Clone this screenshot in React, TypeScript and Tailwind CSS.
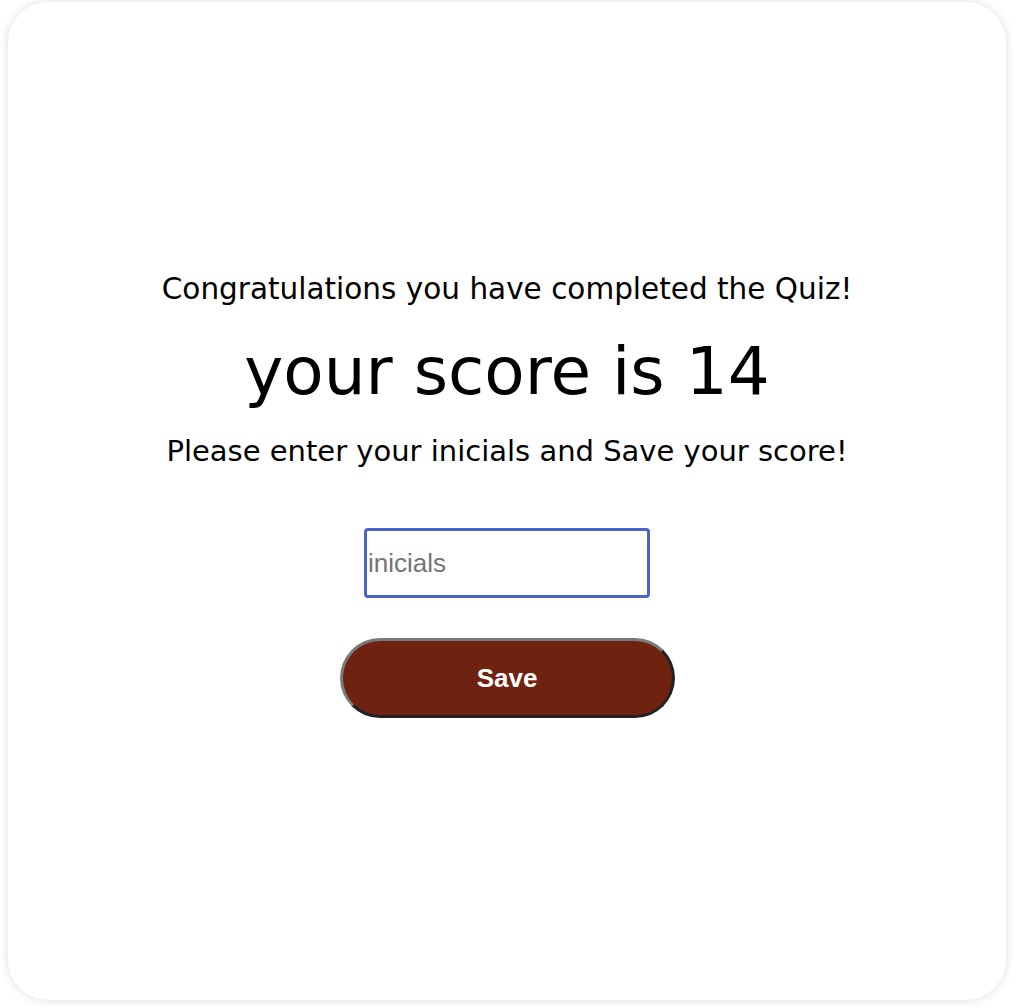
export default function App() {
  return (
    <div className="min-h-screen bg-white px-[8px] pt-[2px] pb-[8px]">
      <div className="flex h-[998px] w-[998px] flex-col items-center rounded-[40px] bg-white pt-[266px] shadow-[0_0_10px_rgba(0,0,0,0.14)]">
        <p className="font-['DejaVu_Sans',sans-serif] text-[29.5px] leading-[42px] text-black">
          Congratulations you have completed the Quiz!
        </p>
        <h1 className="mt-[22px] font-['DejaVu_Sans',sans-serif] text-[66px] leading-[80px] text-black">
          your score is 14
        </h1>
        <p className="mt-[18px] font-['DejaVu_Sans',sans-serif] text-[29px] leading-[42px] text-black">
          Please enter your inicials and Save your score!
        </p>
        <input
          type="text"
          placeholder="inicials"
          autoFocus
          className="mt-[56px] h-[70px] w-[286px] rounded-[4px] border-[3px] border-[#4a63c8] px-[1px] font-['Liberation_Sans',sans-serif] text-[26px] text-black caret-black outline-none placeholder:text-[#757575]"
        />
        <button className="mt-[40px] h-[80px] w-[335px] rounded-full border-[3px] border-t-[#7a7a7a] border-l-[#7a7a7a] border-r-[#222] border-b-[#222] bg-[#6f2210] font-['Liberation_Sans',sans-serif] text-[26px] font-bold text-white">
          Save
        </button>
      </div>
    </div>
  );
}
